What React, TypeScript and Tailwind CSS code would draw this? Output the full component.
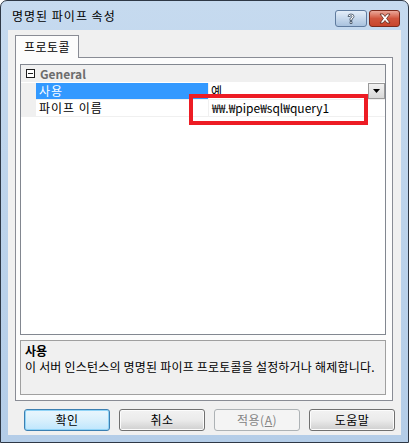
import React from "react";

const font = { fontFamily: '"Noto Sans CJK KR", "Liberation Sans", sans-serif' };

function TitleButtons() {
  return (
    <div className="flex items-start gap-[2px] pt-[9px] pr-[8px]">
      {/* help */}
      <div className="w-[32px] h-[17px] rounded-[3px] border border-[#5f7b9e] bg-gradient-to-b from-[#e4eef9] via-[#c6d8ec] to-[#a9c2de] flex items-center justify-center">
        <svg width="10" height="12" viewBox="0 0 10 12">
          <path
            d="M2 3.5 Q2 1 5 1 Q8 1 8 3.5 Q8 5 6 6 L6 7.5 L4 7.5 L4 5.5 Q6 4.5 6 3.5 Q6 2.6 5 2.6 Q4 2.6 4 3.5 Z M4 8.5 L6 8.5 L6 10.5 L4 10.5 Z"
            fill="#ffffff"
            stroke="#3b4a5c"
            strokeWidth="0.8"
          />
        </svg>
      </div>
      {/* close */}
      <div className="w-[31px] h-[17px] rounded-[3px] border border-[#7a2a1c] bg-gradient-to-b from-[#eaa89a] via-[#d0553d] to-[#c8452c] flex items-center justify-center">
        <svg width="14" height="11" viewBox="0 0 14 11">
          <path
            d="M2 1 L5 1 L7 3.5 L9 1 L12 1 L8.6 5.5 L12 10 L9 10 L7 7.5 L5 10 L2 10 L5.4 5.5 Z"
            fill="#ffffff"
            stroke="#5a2418"
            strokeWidth="0.8"
          />
        </svg>
      </div>
    </div>
  );
}

function Button({
  label,
  primary,
  disabled,
}: {
  label: React.ReactNode;
  primary?: boolean;
  disabled?: boolean;
}) {
  const cls = primary
    ? "border-[#3c7fb1] bg-gradient-to-b from-[#eaf6fd] via-[#d9f0fc] to-[#bee6fd] shadow-[inset_0_0_0_1px_#90d4f7]"
    : disabled
    ? "border-[#adb2b5] bg-[#f4f4f4] text-[#838383]"
    : "border-[#707070] bg-gradient-to-b from-[#f2f2f2] via-[#ebebeb] to-[#cfcfcf] shadow-[inset_0_0_0_1px_#fcfcfc]";
  return (
    <div
      className={`w-[86px] h-[22px] rounded-[3px] border flex items-center justify-center text-[12px] tracking-[0.5px] ${cls}`}
    >
      {label}
    </div>
  );
}

export default function App() {
  return (
    <div
      className="w-[409px] h-[443px] rounded-t-[7px] border border-[#2e3846] bg-gradient-to-b from-[#c6daef] via-[#bcd3eb] to-[#b4cde8] flex flex-col text-black"
      style={font}
    >
      {/* Title bar */}
      <div className="h-[29px] flex justify-between">
        <div className="pl-[11px] pt-[6px] text-[12px] tracking-[1px] text-black">명명된 파이프 속성</div>
        <TitleButtons />
      </div>

      {/* Client area */}
      <div className="mx-[7px] mb-[7px] flex-1 bg-[#f0f0f0] flex flex-col">
        {/* tabs */}
        <div className="pl-[7px] pt-[5px] flex flex-col">
          <div className="flex">
            <div className="relative z-10 -mb-px w-[64px] h-[23px] border border-b-0 border-[#898c95] bg-[#fcfcfc] flex items-center justify-center text-[12px] tracking-[0.5px]">
              프로토콜
            </div>
          </div>
          <div className="w-[378px] h-[344px] border border-[#898c95] bg-[#fcfcfc] pl-[4px] pt-[6px] flex flex-col gap-[5px]">
            {/* Property grid */}
            <div className="w-[366px] h-[271px] border border-[#828790] bg-white flex flex-col text-[12px]">
              {/* category */}
              <div className="h-[17px] bg-[#f0f0f0] flex items-center">
                <div className="w-[15px] flex items-center justify-center">
                  <div className="w-[9px] h-[9px] border border-[#1e1e1e] bg-white flex items-center justify-center ml-[3px]">
                    <div className="w-[5px] h-px bg-[#1e1e1e]" />
                  </div>
                </div>
                <div className="pl-[4px] text-[#6d6d6d] font-semibold">General</div>
              </div>
              {/* row 1 */}
              <div className="h-[17px] flex border-b border-[#f0f0f0] mt-px">
                <div className="w-[15px] bg-[#f0f0f0]" />
                <div className="w-[172px] bg-[#3399ff] text-white pl-[3px] leading-[16px] tracking-[1px]">사용</div>
                <div className="w-px bg-[#f0f0f0]" />
                <div className="flex-1 flex justify-between">
                  <div className="pl-[2px] leading-[16px]">예</div>
                  <div className="w-[17px] h-[16px] bg-gradient-to-b from-[#f2f2f2] to-[#d8d8d8] border border-[#9a9a9a] flex items-center justify-center">
                    <svg width="7" height="4" viewBox="0 0 7 4">
                      <path d="M0 0 L7 0 L3.5 4 Z" fill="#000" />
                    </svg>
                  </div>
                </div>
              </div>
              {/* row 2 */}
              <div className="h-[17px] flex border-b border-[#f0f0f0]">
                <div className="w-[15px] bg-[#f0f0f0]" />
                <div className="w-[172px] pl-[3px] leading-[16px] tracking-[1px]">파이프 이름</div>
                <div className="w-px bg-[#f0f0f0]" />
                <div className="relative flex-1">
                  <div className="pl-[3px] leading-[16px]">₩₩.₩pipe₩sql₩query1</div>
                  <div className="absolute left-[-20px] top-[-6px] w-[179px] h-[31px] border-[4px] border-[#ed1c24]" />
                </div>
              </div>
            </div>
            {/* Description */}
            <div className="w-[366px] h-[55px] border border-[#a0a0a0] bg-[#f0f0f0] px-[4px] pt-[2px] text-[12px] leading-[16px]">
              <div className="font-bold">사용</div>
              <div className="tracking-[0.2px]">
                이 서버 인스턴스의 명명된 파이프 프로토콜을 설정하거나 해제합니다.
              </div>
            </div>
          </div>
        </div>

        {/* buttons */}
        <div className="flex gap-[9px] pl-[16px] pt-[8px]">
          <Button label="확인" primary />
          <Button label="취소" />
          <Button
            label={
              <span>
                적용(<span className="underline">A</span>)
              </span>
            }
            disabled
          />
          <Button label="도움말" />
        </div>
      </div>
    </div>
  );
}
